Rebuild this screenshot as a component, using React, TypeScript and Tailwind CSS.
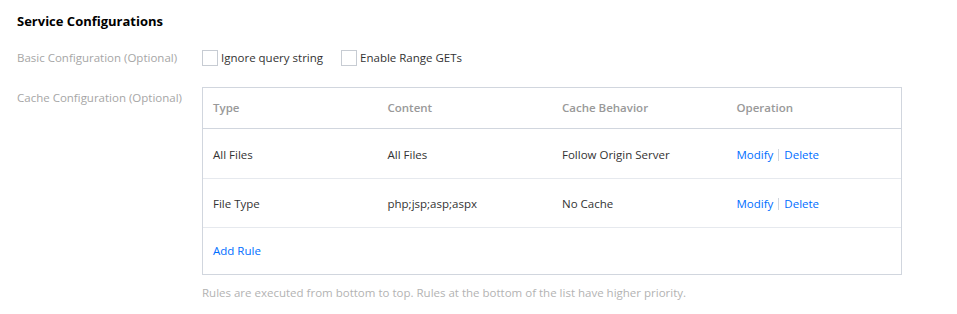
import React from "react";

const font = { fontFamily: '"Open Sans", "Noto Sans", sans-serif' };

function Checkbox({ label }: { label: string }) {
  return (
    <label className="flex items-center gap-[3px]">
      <span className="block w-[16px] h-[16px] border border-[#c7ccd3] bg-white" />
      <span className="text-[11.5px] text-[#333]">{label}</span>
    </label>
  );
}

const rows = [
  ["All Files", "All Files", "Follow Origin Server"],
  ["File Type", "php;jsp;asp;aspx", "No Cache"],
];

export default function App() {
  return (
    <div className="w-[957px] h-[314px] bg-white pl-[17px] pt-[13px]" style={font}>
      <div className="text-[13px] font-bold text-black leading-[17px]">Service Configurations</div>
      <div className="flex mt-[20px] h-[16px] items-center">
        <div className="w-[185px] text-[11.5px] text-[#a6a6a6]">Basic Configuration (Optional)</div>
        <div className="flex items-center gap-[18px]">
          <Checkbox label="Ignore query string" />
          <Checkbox label="Enable Range GETs" />
        </div>
      </div>
      <div className="flex mt-[21px]">
        <div className="w-[185px] text-[11.5px] text-[#a6a6a6] pt-[2px]">Cache Configuration (Optional)</div>
        <div className="w-[700px]">
          <div className="border border-[#d1d6de] text-[11.5px]">
            <div className="grid grid-cols-4 h-[41px] items-center border-b border-[#d1d6de] text-[#999] font-semibold">
              <div className="pl-[10px]">Type</div>
              <div className="pl-[10px]">Content</div>
              <div className="pl-[10px]">Cache Behavior</div>
              <div className="pl-[10px]">Operation</div>
            </div>
            {rows.map((r, i) => (
              <div
                key={i}
                className={`grid grid-cols-4 items-center border-b border-[#e6e9ee] text-[#333] pt-[2px] ${i === 0 ? "h-[50px]" : "h-[49px]"}`}
              >
                <div className="pl-[10px]">{r[0]}</div>
                <div className="pl-[10px]">{r[1]}</div>
                <div className="pl-[10px]">{r[2]}</div>
                <div className="pl-[10px] flex items-center text-[#006eff]">
                  <span>Modify</span>
                  <span className="mx-[5px] w-px h-[12px] bg-[#d1d6de]" />
                  <span>Delete</span>
                </div>
              </div>
            ))}
            <div className="h-[46px] flex items-center pl-[10px] text-[#006eff]">Add Rule</div>
          </div>
          <div className="mt-[9px] text-[11.5px] text-[#b3b3b3]">
            Rules are executed from bottom to top. Rules at the bottom of the list have higher priority.
          </div>
        </div>
      </div>
    </div>
  );
}
